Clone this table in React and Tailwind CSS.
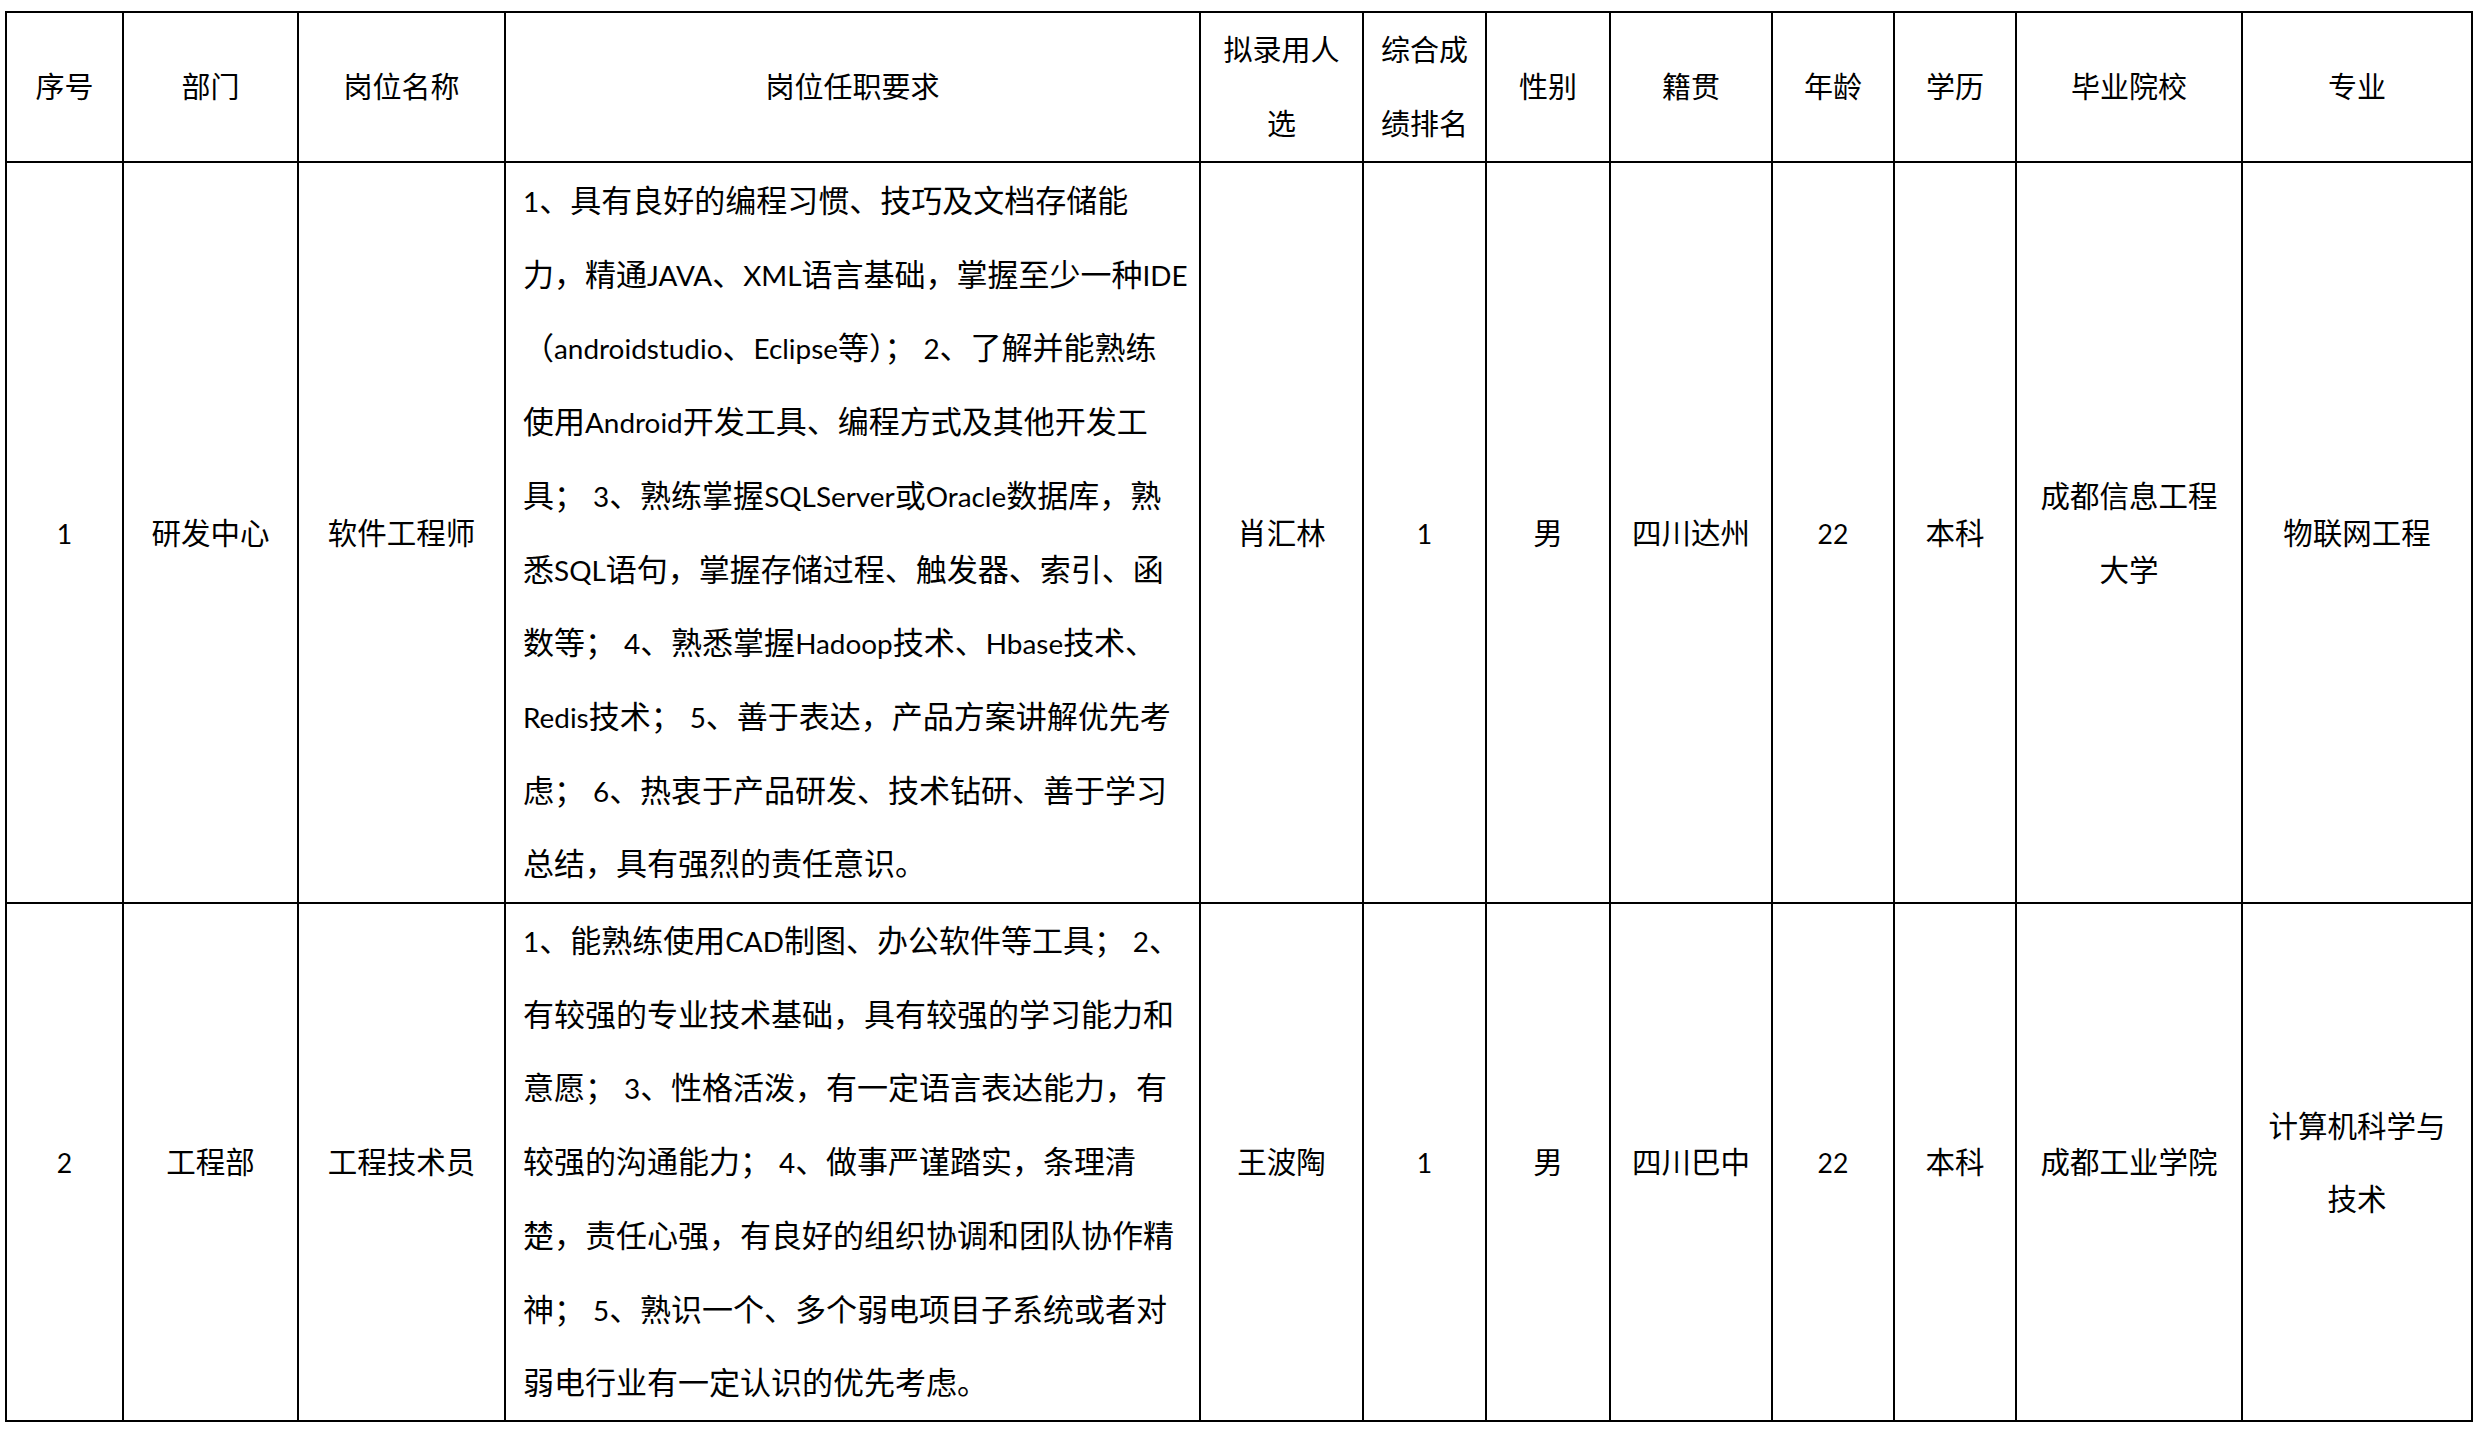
import React from 'react';

const headers = [
  ['序号'],
  ['部门'],
  ['岗位名称'],
  ['岗位任职要求'],
  ['拟录用人', '选'],
  ['综合成', '绩排名'],
  ['性别'],
  ['籍贯'],
  ['年龄'],
  ['学历'],
  ['毕业院校'],
  ['专业'],
];

const rows = [
  {
    no: '1',
    dept: '研发中心',
    title: '软件工程师',
    reqs: [
      '1、具有良好的编程习惯、技巧及文档存储能',
      '力，精通JAVA、XML语言基础，掌握至少一种IDE',
      '（androidstudio、Eclipse等）； 2、了解并能熟练',
      '使用Android开发工具、编程方式及其他开发工',
      '具； 3、熟练掌握SQLServer或Oracle数据库，熟',
      '悉SQL语句，掌握存储过程、触发器、索引、函',
      '数等； 4、熟悉掌握Hadoop技术、Hbase技术、',
      'Redis技术； 5、善于表达，产品方案讲解优先考',
      '虑； 6、热衷于产品研发、技术钻研、善于学习',
      '总结，具有强烈的责任意识。',
    ],
    name: '肖汇林',
    rank: '1',
    sex: '男',
    origin: '四川达州',
    age: '22',
    edu: '本科',
    school: ['成都信息工程', '大学'],
    major: ['物联网工程'],
  },
  {
    no: '2',
    dept: '工程部',
    title: '工程技术员',
    reqs: [
      '1、能熟练使用CAD制图、办公软件等工具； 2、',
      '有较强的专业技术基础，具有较强的学习能力和',
      '意愿； 3、性格活泼，有一定语言表达能力，有',
      '较强的沟通能力； 4、做事严谨踏实，条理清',
      '楚，责任心强，有良好的组织协调和团队协作精',
      '神； 5、熟识一个、多个弱电项目子系统或者对',
      '弱电行业有一定认识的优先考虑。',
    ],
    name: '王波陶',
    rank: '1',
    sex: '男',
    origin: '四川巴中',
    age: '22',
    edu: '本科',
    school: ['成都工业学院'],
    major: ['计算机科学与', '技术'],
  },
];

// latin runs a touch smaller so Lato sits like Calibri next to the CJK glyphs
const Txt = ({ s }) =>
  s.split(/([A-Za-z0-9]+)/).map((p, i) =>
    /[A-Za-z0-9]/.test(p) ? (
      <span key={i} className="text-[0.9em] leading-none">
        {p}
      </span>
    ) : (
      <React.Fragment key={i}>{p}</React.Fragment>
    )
  );

const Cell = ({ lines }) => (
  <div className="bg-white flex flex-col items-center justify-center text-center text-[29.5px] leading-[73.5px] whitespace-nowrap">
    {lines.map((l, i) => (
      <div key={i}>
        <Txt s={l} />
      </div>
    ))}
  </div>
);

const App = () => {
  return (
    <div className="min-h-screen bg-white text-black font-['Lato','Noto_Sans_CJK_SC',sans-serif]">
      <div className="ml-[5px] pt-[11px]">
        <div className="w-fit grid grid-cols-[115px_173px_205px_693px_161px_121px_122px_160px_120px_120px_224px_228px] grid-rows-[148px_739px_516px] gap-[2px] bg-black p-[2px]">
          {headers.map((h, i) => (
            <div
              key={i}
              className="bg-white flex flex-col items-center justify-center text-center text-[29px] leading-[74px] whitespace-nowrap"
            >
              {h.map((l, j) => (
                <div key={j}>{l}</div>
              ))}
            </div>
          ))}

          {rows.map((r) => (
            <React.Fragment key={r.no}>
              <Cell lines={[r.no]} />
              <Cell lines={[r.dept]} />
              <Cell lines={[r.title]} />
              <div className="bg-white flex flex-col justify-center pl-[17px] text-[31px] leading-[73.7px] whitespace-nowrap">
                {r.reqs.map((l, i) => (
                  <div key={i}>
                    <Txt s={l} />
                  </div>
                ))}
              </div>
              <Cell lines={[r.name]} />
              <Cell lines={[r.rank]} />
              <Cell lines={[r.sex]} />
              <Cell lines={[r.origin]} />
              <Cell lines={[r.age]} />
              <Cell lines={[r.edu]} />
              <Cell lines={r.school} />
              <Cell lines={r.major} />
            </React.Fragment>
          ))}
        </div>
      </div>
    </div>
  );
};

export default App;
